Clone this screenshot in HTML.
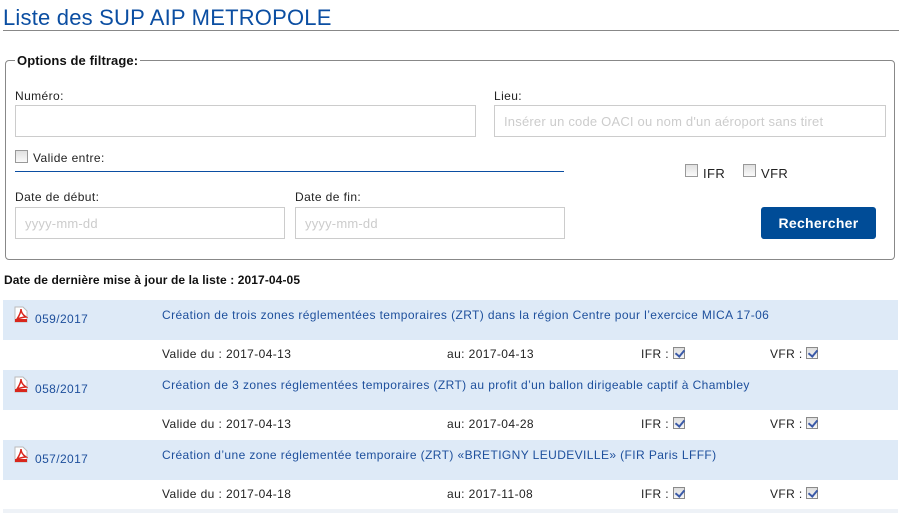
<!DOCTYPE html>
<html><head><meta charset="utf-8"><style>
*{box-sizing:border-box;margin:0;padding:0}
body{width:899px;height:513px;background:#fff;font-family:"Liberation Sans",sans-serif;font-size:12px;color:#222;position:relative;overflow:hidden}
.a{position:absolute;white-space:nowrap;letter-spacing:0.4px}
.in{position:absolute;border:1px solid #ccc;height:32px;background:#fff;color:#ccc;font-size:13px;padding:8px 9px;letter-spacing:0.2px;white-space:nowrap}
.cb{position:absolute;width:13px;height:13px;border:1px solid #999;background:linear-gradient(#e0e0e0,#fafafa)}
.band{position:absolute;left:3px;width:895px;height:40px;background:#deeaf7}
.lnk{color:#1d4f9c}
.ck{display:inline-block;width:12px;height:12px;border:1px solid #8a8a8a;background:linear-gradient(#ddd,#f7f7f7);vertical-align:-1px;position:relative}
.ck:after{content:"";position:absolute;left:3px;top:0px;width:4px;height:7px;border:solid #3b5aa8;border-width:0 2px 2px 0;transform:rotate(40deg)}
.pdf{position:absolute;width:14px;height:17px}
</style></head><body>
<div class="a" style="left:3px;top:5px;font-size:22px;letter-spacing:0.2px;color:#0b4ea2">Liste des SUP AIP METROPOLE</div>
<div class="a" style="left:3px;top:30px;width:896px;height:1px;background:#888"></div>
<div class="a" style="left:5px;top:60px;width:890px;height:200px;border:1px solid #888;border-radius:4px"></div>
<div class="a" style="left:15px;top:53px;background:#fff;padding:0 2px;font-weight:bold;font-size:13px;letter-spacing:0.1px;color:#111">Options de filtrage:</div>
<div class="a" style="left:15px;top:89px">Numéro:</div>
<div class="in" style="left:15px;top:105px;width:461px"></div>
<div class="a" style="left:494px;top:89px">Lieu:</div>
<div class="in" style="left:494px;top:105px;width:392px">Insérer un code OACI ou nom d'un aéroport sans tiret</div>
<div class="cb" style="left:15px;top:150px"></div>
<div class="a" style="left:33px;top:151px">Valide entre:</div>
<div class="a" style="left:15px;top:171px;width:549px;height:1px;background:#0b4ea2"></div>
<div class="cb" style="left:685px;top:164px"></div><div class="a" style="left:703px;top:166px;font-size:13px">IFR</div>
<div class="cb" style="left:743px;top:164px"></div><div class="a" style="left:761px;top:166px;font-size:13px">VFR</div>
<div class="a" style="left:15px;top:190px">Date de début:</div>
<div class="in" style="left:15px;top:207px;width:270px">yyyy-mm-dd</div>
<div class="a" style="left:295px;top:190px">Date de fin:</div>
<div class="in" style="left:295px;top:207px;width:270px">yyyy-mm-dd</div>
<div class="a" style="left:761px;top:207px;width:115px;height:32px;background:#004c97;border-radius:3px;color:#fff;font-weight:bold;font-size:14px;text-align:center;line-height:32px;letter-spacing:0.3px">Rechercher</div>
<div class="a" style="left:4px;top:273px;font-weight:bold;color:#111;letter-spacing:0.1px">Date de dernière mise à jour de la liste : 2017-04-05</div>

<div class="band" style="top:300px"></div>
<div class="band" style="top:370px"></div>
<div class="band" style="top:440px"></div>
<div class="a" style="left:3px;top:509px;width:895px;height:4px;background:#eef2f7"></div>

<svg class="pdf" style="left:14px;top:306px" viewBox="0 0 14 17"><path d="M1 1h8l4 4v11H1z" fill="#fff" stroke="#bbb"/><path d="M3 13c2-3 4-7 4-10c0 3 2 6 5 8c-3 0-6 1-9 2z" fill="none" stroke="#d9261c" stroke-width="1.5"/><rect x="1" y="13" width="12" height="3" fill="#d9261c"/></svg>
<svg class="pdf" style="left:14px;top:376px" viewBox="0 0 14 17"><path d="M1 1h8l4 4v11H1z" fill="#fff" stroke="#bbb"/><path d="M3 13c2-3 4-7 4-10c0 3 2 6 5 8c-3 0-6 1-9 2z" fill="none" stroke="#d9261c" stroke-width="1.5"/><rect x="1" y="13" width="12" height="3" fill="#d9261c"/></svg>
<svg class="pdf" style="left:14px;top:446px" viewBox="0 0 14 17"><path d="M1 1h8l4 4v11H1z" fill="#fff" stroke="#bbb"/><path d="M3 13c2-3 4-7 4-10c0 3 2 6 5 8c-3 0-6 1-9 2z" fill="none" stroke="#d9261c" stroke-width="1.5"/><rect x="1" y="13" width="12" height="3" fill="#d9261c"/></svg>

<div class="a lnk" style="left:35px;top:312px">059/2017</div>
<div class="a lnk" style="left:162px;top:308px">Création de trois zones réglementées temporaires (ZRT) dans la région Centre pour l’exercice MICA 17-06</div>
<div class="a" style="left:162px;top:347px">Valide du : 2017-04-13</div>
<div class="a" style="left:447px;top:347px">au: 2017-04-13</div>
<div class="a" style="left:641px;top:347px">IFR : <span class="ck"></span></div>
<div class="a" style="left:770px;top:347px">VFR : <span class="ck"></span></div>

<div class="a lnk" style="left:35px;top:382px">058/2017</div>
<div class="a lnk" style="left:162px;top:378px">Création de 3 zones réglementées temporaires (ZRT) au profit d’un ballon dirigeable captif à Chambley</div>
<div class="a" style="left:162px;top:417px">Valide du : 2017-04-13</div>
<div class="a" style="left:447px;top:417px">au: 2017-04-28</div>
<div class="a" style="left:641px;top:417px">IFR : <span class="ck"></span></div>
<div class="a" style="left:770px;top:417px">VFR : <span class="ck"></span></div>

<div class="a lnk" style="left:35px;top:452px">057/2017</div>
<div class="a lnk" style="left:162px;top:448px">Création d’une zone réglementée temporaire (ZRT) «BRETIGNY LEUDEVILLE» (FIR Paris LFFF)</div>
<div class="a" style="left:162px;top:487px">Valide du : 2017-04-18</div>
<div class="a" style="left:447px;top:487px">au: 2017-11-08</div>
<div class="a" style="left:641px;top:487px">IFR : <span class="ck"></span></div>
<div class="a" style="left:770px;top:487px">VFR : <span class="ck"></span></div>
</body></html>
